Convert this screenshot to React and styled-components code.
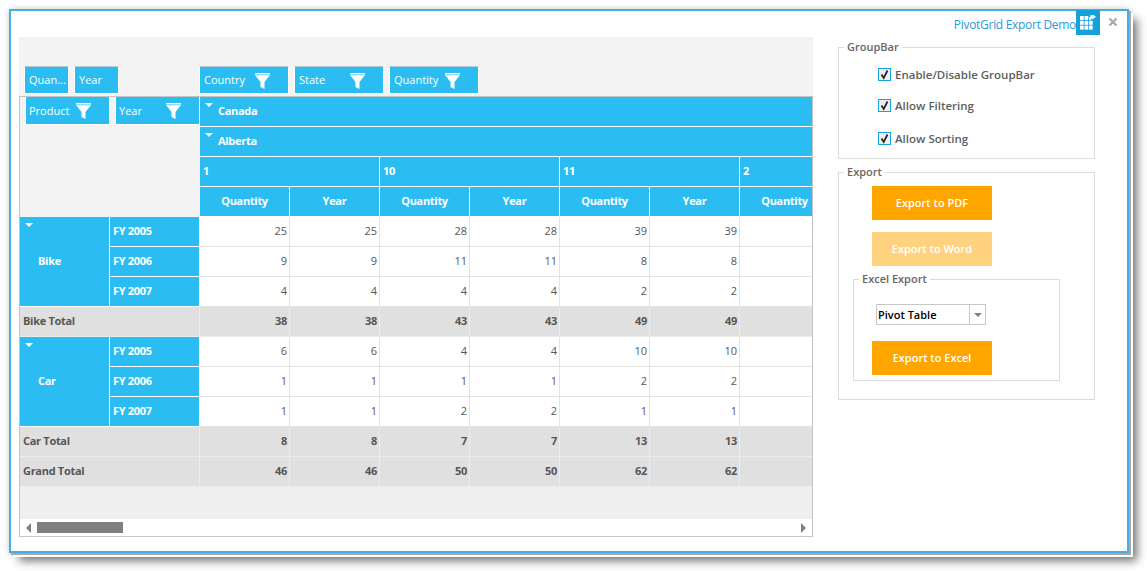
import React from "react";
import styled, { createGlobalStyle } from "styled-components";

const Global = createGlobalStyle`
  html, body { margin: 0; padding: 0; background: #fff; min-height: 571px; }
  body { font-family: "Open Sans", "Noto Sans", sans-serif; }
`;

const Page = styled.div`
  box-sizing: border-box;
  width: 1147px;
  height: 571px;
  padding: 9px 0 0 9px;
  overflow: hidden;
`;
const Frame = styled.div`
  box-sizing: border-box;
  width: 1120px;
  height: 544px;
  border: 2px solid #45aee0;
  background: #fff;
  box-shadow:
    2px 2px 0 0 #a8a8a8,
    4px 4px 0 0 #fff,
    9px 9px 9px -1px rgba(0,0,0,.55),
    0 0 6px rgba(0,0,0,.22);
`;
const Header = styled.header`
  display: flex;
  justify-content: flex-end;
  align-items: flex-start;
  height: 27px;
  margin-top: -1px;
  padding-right: 1px;
`;
const Title = styled.span`
  font-size: 12px;
  letter-spacing: -.3px;
  line-height: 29px;
  color: #2b9ad8;
`;
const AppIcon = styled.div`
  width: 24px;
  height: 25px;
  background: #16a0dc;
  display: flex;
`;
const Close = styled.div`
  width: 26px;
  height: 24px;
  display: flex;
  align-items: center;
  justify-content: center;
`;
const Body = styled.div`
  display: flex;
  align-items: flex-start;
  padding-left: 8px;
`;
const GridPanel = styled.section`
  box-sizing: border-box;
  width: 794px;
  height: 500px;
  background: #f3f3f3;
  display: flex;
  flex-direction: column;
`;
const GroupBar = styled.div`
  height: 59px;
  display: flex;
  align-items: flex-end;
  padding: 0 0 2px 5px;
  box-sizing: border-box;
`;
const Chip = styled.div`
  box-sizing: border-box;
  flex: none;
  width: ${p => p.$w}px;
  height: 28px;
  margin-right: ${p => p.$gap || 0}px;
  background: #2bbdf1;
  color: #fff;
  font-size: 11px;
  border: 1px solid #fff;
  border-top: ${p => (p.$flat ? "0" : "1px solid #b9c9d2")};
  padding: 0 3px ${p => (p.$flat ? 0 : 2)}px ${p => (p.$flat ? 3 : 4)}px;
  display: flex;
  align-items: center;
  justify-content: space-between;
  white-space: nowrap;
  overflow: hidden;
  svg { margin-top: ${p => (p.$flat ? 0 : 3)}px; }
`;
const FilterSvg = styled.svg`
  width: 15px;
  height: 16px;
  margin-right: 15px;
  flex: none;
`;
const Filter = () => (
  <FilterSvg viewBox="0 0 15 16">
    <rect x="0" y="0" width="15" height="1" fill="#fff" />
    <rect x="0" y="1" width="15" height="1" fill="#8fdcf7" />
    <path d="M0 2h15L9.5 9v7L5.5 14V9z" fill="#fff" />
    <rect x="1" y="2" width="13" height="1" fill="#d6f2fc" />
  </FilterSvg>
);
const TableFrame = styled.div`
  flex: 1;
  min-height: 0;
  border: 1px solid #c4c4c4;
  display: flex;
  flex-direction: column;
  overflow: hidden;
`;
const Viewport = styled.div`
  flex: 1;
  min-height: 0;
  background: #efefef;
  overflow: hidden;
`;
const Pivot = styled.div`
  display: grid;
  width: 810px;
  grid-template-columns: repeat(9, 90px);
  grid-auto-rows: 30px;
`;
const Corner = styled.div`
  grid-column: 1 / 3;
  grid-row: 1 / 5;
  background: #f3f3f3;
  display: flex;
  padding-left: 5px;
  gap: 5px;
  align-items: flex-start;
`;
const Head = styled.div`
  box-sizing: border-box;
  grid-column: ${p => p.$span};
  grid-row: ${p => p.$row || "auto"};
  background: #2bbdf1;
  color: #fff;
  font-size: 11px;
  font-weight: 700;
  letter-spacing: -.3px;
  border-right: 1px solid #fff;
  border-bottom: 1px solid #fff;
  display: flex;
  align-items: center;
  justify-content: ${p => (p.$center ? "center" : "flex-start")};
  padding: 0 0 2px ${p => p.$pad ?? 3}px;
  white-space: nowrap;
`;
const Arrow = styled.i`
  width: 0;
  height: 0;
  border-left: 4.5px solid transparent;
  border-right: 4.5px solid transparent;
  border-top: 4.5px solid #fff;
  align-self: flex-start;
  flex: none;
  margin: 6px 5px 0 5px;
`;
const RowHead = styled(Head)`
  position: relative;
`;
const RowArrow = styled(Arrow)`
  position: absolute;
  left: 0;
  top: 0;
`;
const Cell = styled.div`
  box-sizing: border-box;
  background: ${p => (p.$total ? "#e0e0e0" : "#fff")};
  color: #565656;
  font-size: 11px;
  font-weight: ${p => (p.$total ? 700 : 400)};
  letter-spacing: ${p => (p.$total ? "-.3px" : "0")};
  border-right: 1px solid ${p => (p.$total ? "#ececec" : "#e4e4e4")};
  border-bottom: 1px solid ${p => (p.$total ? "#ececec" : "#e4e4e4")};
  display: flex;
  align-items: center;
  justify-content: flex-end;
  padding: 0 2px 2px 0;
`;
const TotalLabel = styled(Cell)`
  grid-column: 1 / 3;
  justify-content: flex-start;
  padding-left: 3px;
`;
const Scrollbar = styled.div`
  height: 17px;
  flex: none;
  background: #fff;
  display: flex;
  align-items: center;
  padding: 0 6px;
`;
const ScrollArrow = styled.i`
  width: 0;
  height: 0;
  border-top: 5px solid transparent;
  border-bottom: 5px solid transparent;
  ${p => (p.$right ? "border-left: 5px solid #808080; margin-left: auto;" : "border-right: 5px solid #808080;")}
`;
const Thumb = styled.div`
  width: 86px;
  height: 11px;
  background: #808080;
  margin-left: 6px;
`;
const Side = styled.aside`
  width: 257px;
  margin-left: 25px;
  padding-top: 3px;
  display: flex;
  flex-direction: column;
  gap: 6px;
`;
const Box = styled.fieldset`
  box-sizing: border-box;
  min-width: 0;
  margin: ${p => p.$m || 0};
  width: ${p => p.$w}px;
  height: ${p => p.$h}px;
  border: 1px solid #dcdcdc;
  padding: 0;
`;
const Legend = styled.legend`
  margin-left: 5px;
  padding: 0 3px;
  font-size: 11px;
  font-weight: 600;
  line-height: 14px;
  color: #666;
`;
const CheckRow = styled.label`
  display: flex;
  align-items: center;
  height: 16px;
  margin: ${p => p.$m} 0 0 39px;
  font-size: 11.5px;
  font-weight: 600;
  color: #5e5e5e;
  white-space: nowrap;
`;
const Check = styled.span`
  box-sizing: border-box;
  width: 13px;
  height: 13px;
  margin-right: 4px;
  border: 1px solid #1ba1e2;
  background: #eee;
  display: flex;
`;
const Btn = styled.button`
  display: block;
  width: 120px;
  height: 34px;
  margin: ${p => p.$m || 0};
  padding: 0 0 2px;
  border: 0;
  background: ${p => (p.$off ? "#ffd27f" : "#ffa500")};
  color: #fff;
  font-family: inherit;
  font-size: 11px;
  font-weight: 600;
`;
const Select = styled.div`
  box-sizing: border-box;
  width: 110px;
  height: 21px;
  margin: 18px 0 0 22px;
  border: 1px solid #c8c8c8;
  display: flex;
  align-items: center;
  font-size: 11px;
  font-weight: 600;
  color: #000;
  padding-left: 1px;
`;
const SelectText = styled.span`
  flex: 1;
`;
const SelectBtn = styled.span`
  width: 15px;
  height: 100%;
  border-left: 1px solid #c8c8c8;
  display: flex;
  align-items: center;
  justify-content: center;
`;
const SelectArrow = styled.i`
  width: 0;
  height: 0;
  border-left: 4px solid transparent;
  border-right: 4px solid transparent;
  border-top: 4px solid #808080;
`;

const CheckItem = ({ m, children }) => (
  <CheckRow $m={m}>
    <Check>
      <svg width="11" height="11" viewBox="0 0 11 11">
        <path d="M2.5 5.5 L4.7 9 L8.5 1.5" fill="none" stroke="#222" strokeWidth="1.7" />
      </svg>
    </Check>
    {children}
  </CheckRow>
);

const cols = ["Quantity", "Year", "Quantity", "Year", "Quantity", "Year", "Quantity"];
const row = (a, b, c) => [a, a, b, b, c, c, ""];
const groups = [
  {
    name: "Bike",
    rows: [["FY 2005", row(25, 28, 39)], ["FY 2006", row(9, 11, 8)], ["FY 2007", row(4, 4, 2)]],
    total: row(38, 43, 49),
  },
  {
    name: "Car",
    rows: [["FY 2005", row(6, 4, 10)], ["FY 2006", row(1, 1, 2)], ["FY 2007", row(1, 2, 1)]],
    total: row(8, 7, 13),
  },
];

export default function App() {
  return (
    <Page>
      <Global />
      <Frame>
        <Header>
          <Title>PivotGrid Export Demo</Title>
          <AppIcon>
            <svg width="24" height="25" viewBox="0 0 24 25">
              <g fill="#fff">
                <rect x="4" y="6" width="3.7" height="4" /><rect x="8.5" y="6" width="3.7" height="4" />
                <rect x="4" y="10.8" width="3.7" height="4" /><rect x="8.5" y="10.8" width="3.7" height="4" /><rect x="13" y="10.8" width="3.7" height="4" />
                <rect x="4" y="15.6" width="3.7" height="4" /><rect x="8.5" y="15.6" width="3.7" height="4" /><rect x="13" y="15.6" width="3.7" height="4" />
                <path d="M13 7v2.8h2.4V7z" />
                <path d="M14.5 5h3l2.5 1.7-2.5 2h-3z" />
              </g>
            </svg>
          </AppIcon>
          <Close>
            <svg width="10" height="10" viewBox="0 0 10 10">
              <path d="M1.5 1.5 L8.5 8.5 M8.5 1.5 L1.5 8.5" stroke="#a8a8a8" strokeWidth="2.2" />
            </svg>
          </Close>
        </Header>
        <Body>
          <GridPanel>
            <GroupBar>
              <Chip $w={45} $gap={5}>Quan...</Chip>
              <Chip $w={45} $gap={80}>Year</Chip>
              <Chip $w={90} $gap={5}>Country<Filter /></Chip>
              <Chip $w={90} $gap={5}>State<Filter /></Chip>
              <Chip $w={90}>Quantity<Filter /></Chip>
            </GroupBar>
            <TableFrame>
              <Viewport>
                <Pivot>
                  <Corner>
                    <Chip $w={85} $flat>Product<Filter /></Chip>
                    <Chip $w={85} $flat>Year<Filter /></Chip>
                  </Corner>
                  <Head $span="3 / 10" $pad={0}><Arrow />Canada</Head>
                  <Head $span="3 / 10" $pad={0}><Arrow />Alberta</Head>
                  <Head $span="3 / 5">1</Head>
                  <Head $span="5 / 7">10</Head>
                  <Head $span="7 / 9">11</Head>
                  <Head $span="9 / 10">2</Head>
                  {cols.map((c, i) => (
                    <Head key={i} $span={`${i + 3} / ${i + 4}`} $center $pad={0}>{c}</Head>
                  ))}
                  {groups.map((g, gi) => {
                    const start = 5 + gi * 4;
                    return (
                      <React.Fragment key={g.name}>
                        <RowHead $span="1 / 2" $row={`${start} / ${start + 3}`} $pad={18}>
                          <RowArrow />{g.name}
                        </RowHead>
                        {g.rows.map(([label, vals], ri) => (
                          <React.Fragment key={label}>
                            <Head $span="2 / 3" $row={`${start + ri}`}>{label}</Head>
                            {vals.map((v, i) => <Cell key={i}>{v}</Cell>)}
                          </React.Fragment>
                        ))}
                        <TotalLabel $total>{g.name} Total</TotalLabel>
                        {g.total.map((v, i) => <Cell key={i} $total>{v}</Cell>)}
                      </React.Fragment>
                    );
                  })}
                  <TotalLabel $total>Grand Total</TotalLabel>
                  {row(46, 50, 62).map((v, i) => <Cell key={i} $total>{v}</Cell>)}
                </Pivot>
              </Viewport>
              <Scrollbar>
                <ScrollArrow />
                <Thumb />
                <ScrollArrow $right />
              </Scrollbar>
            </TableFrame>
          </GridPanel>
          <Side>
            <Box $w={257} $h={119}>
              <Legend>GroupBar</Legend>
              <CheckItem m="12px">Enable/Disable GroupBar</CheckItem>
              <CheckItem m="15px">Allow Filtering</CheckItem>
              <CheckItem m="17px">Allow Sorting</CheckItem>
            </Box>
            <Box $w={257} $h={235}>
              <Legend>Export</Legend>
              <Btn $m="7px 0 0 33px">Export to PDF</Btn>
              <Btn $m="12px 0 0 33px" $off>Export to Word</Btn>
              <Box $w={207} $h={109} $m="6px 0 0 14px">
                <Legend>Excel Export</Legend>
                <Select>
                  <SelectText>Pivot Table</SelectText>
                  <SelectBtn><SelectArrow /></SelectBtn>
                </Select>
                <Btn $m="16px 0 0 18px">Export to Excel</Btn>
              </Box>
            </Box>
          </Side>
        </Body>
      </Frame>
    </Page>
  );
}
